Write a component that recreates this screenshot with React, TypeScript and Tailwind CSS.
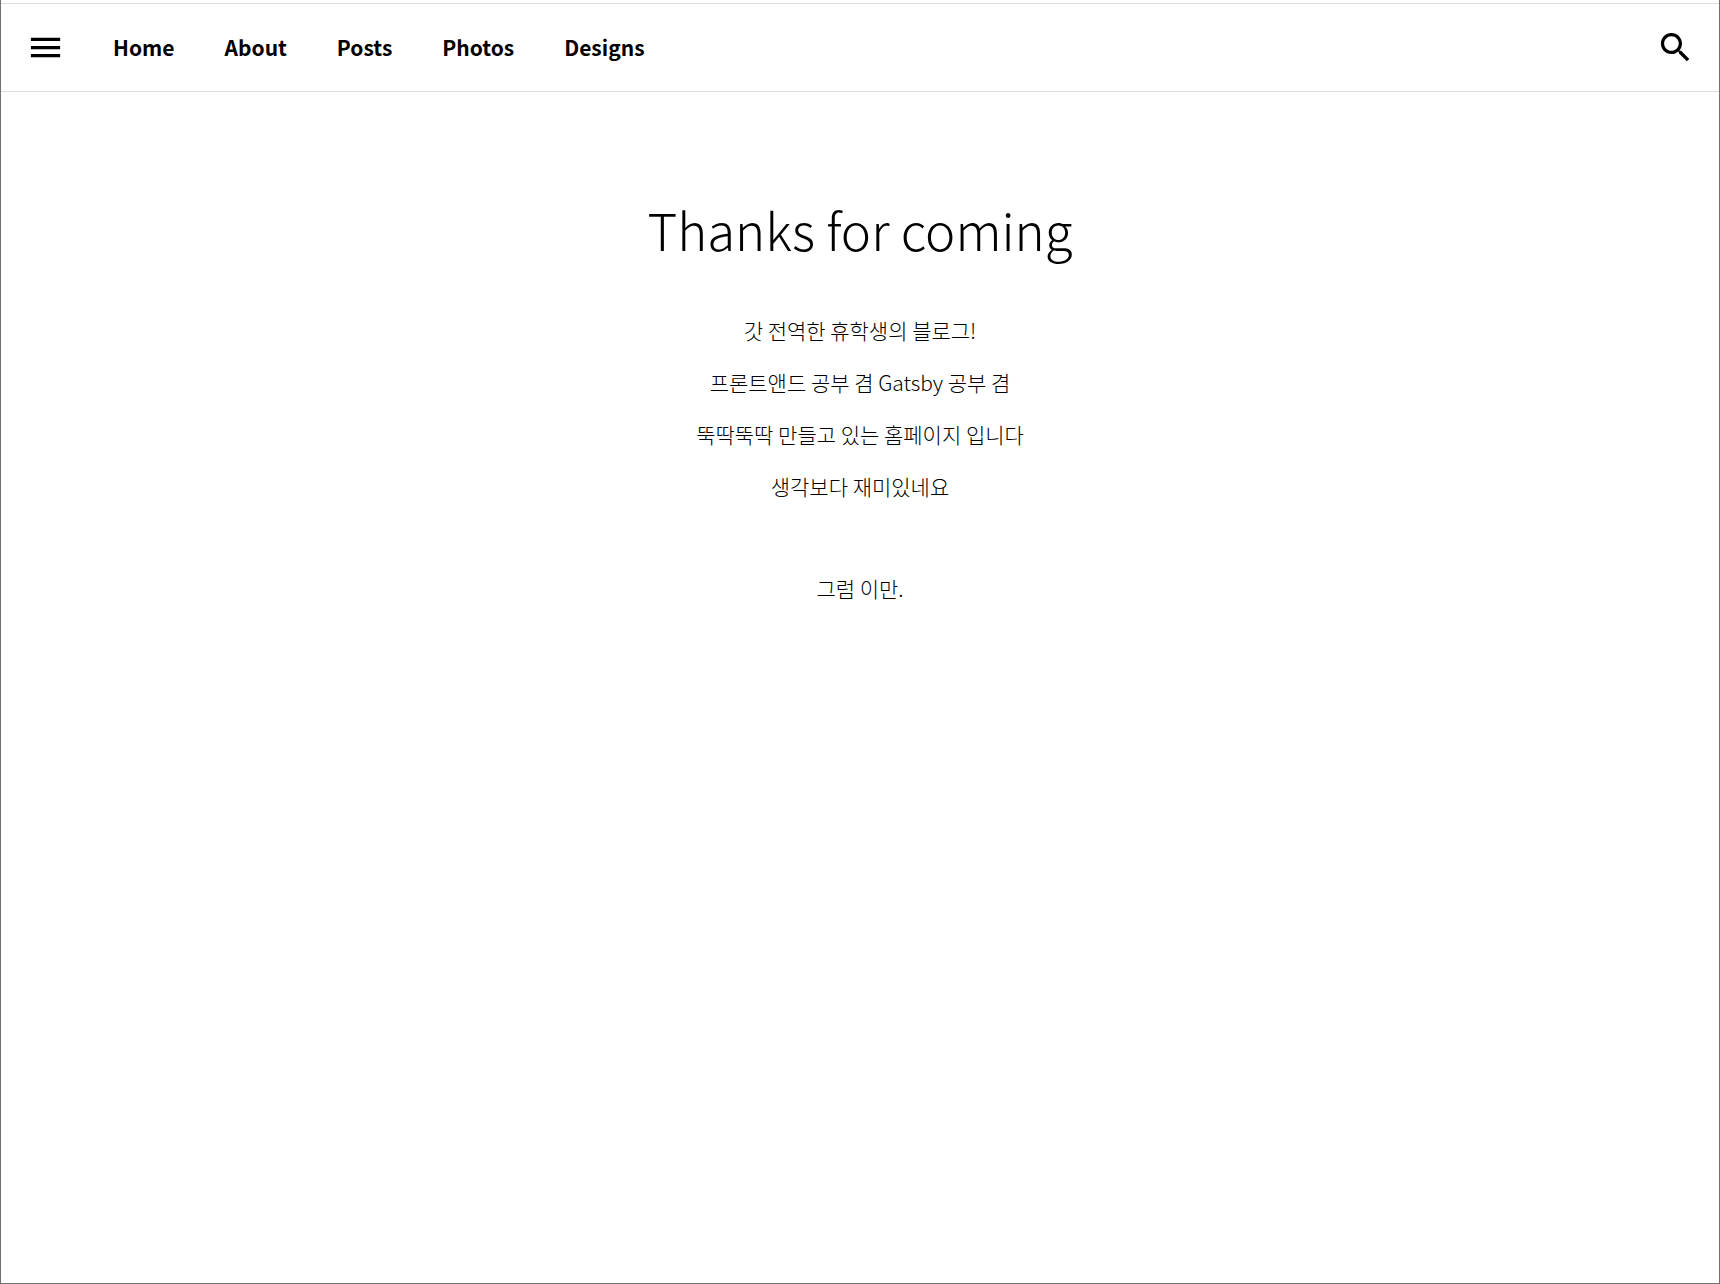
import React from "react";

const links = ["Home", "About", "Posts", "Photos", "Designs"];
const lines = [
  "갓 전역한 휴학생의 블로그!",
  "프론트앤드 공부 겸 Gatsby 공부 겸",
  "뚝딱뚝딱 만들고 있는 홈페이지 입니다",
  "생각보다 재미있네요",
];

export default function App() {
  return (
    <div className="flex min-h-screen flex-col border-x border-b border-[#707070] bg-white font-['Noto_Sans_CJK_KR',sans-serif] text-black">
      <header className="mt-[3px] flex h-[89px] items-center border-y border-[#dcdcdc] pl-[25px] pr-6">
        <button type="button" aria-label="Menu" className="mr-12">
          <svg viewBox="0 0 24 24" className="size-[39px]" fill="currentColor">
            <path d="M3 18h18v-2H3v2zm0-5h18v-2H3v2zm0-7v2h18V6H3z" />
          </svg>
        </button>
        <nav className="flex gap-[50px] text-[21px] font-bold">
          {links.map((l) => (
            <a key={l} href="#">{l}</a>
          ))}
        </nav>
        <button type="button" aria-label="Search" className="ml-auto">
          <svg viewBox="0 0 24 24" className="size-[39px]" fill="currentColor">
            <path d="M15.5 14h-.79l-.28-.27C15.41 12.59 16 11.11 16 9.5 16 5.91 13.09 3 9.5 3S3 5.91 3 9.5 5.91 16 9.5 16c1.61 0 3.09-.59 4.23-1.57l.27.28v.79l5 4.99L20.49 19l-4.99-5zm-6 0C7.01 14 5 11.99 5 9.5S7.01 5 9.5 5 14 7.01 14 9.5 11.99 14 9.5 14z" />
          </svg>
        </button>
      </header>
      <main className="flex flex-col items-center pt-24 text-center">
        <h1 className="text-[51px] leading-[82px] font-light">Thanks for coming</h1>
        <div className="mt-[34px] text-[21px] leading-[52px] font-light">
          {lines.map((l) => (
            <p key={l}>{l}</p>
          ))}
          <p className="mt-[50px]">그럼 이만.</p>
        </div>
      </main>
    </div>
  );
}
